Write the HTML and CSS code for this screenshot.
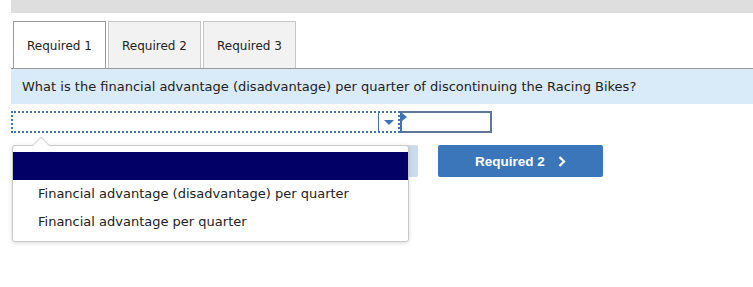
FILE: index.html
```html
<!DOCTYPE html>
<html lang="en">
<head>
  <meta charset="UTF-8">
  <title>Required 1</title>
  <link rel="stylesheet" href="styles.css">
</head>
<body>
  <div class="topbar"></div>

  <div class="tabs">
    <div class="tab active">Required 1</div>
    <div class="tab">Required 2</div>
    <div class="tab">Required 3</div>
  </div>

  <div class="question">What is the financial advantage (disadvantage) per quarter of discontinuing the Racing Bikes?</div>

  <div class="answer-row">
    <div class="select-box">
      <span class="select-arrow"></span>
    </div>
    <div class="amount-box"></div>
  </div>

  <div class="nav-row">
    <button class="nav-btn prev">Required 1</button>
    <button class="nav-btn next">Required 2
      <svg class="chev" width="8" height="11" viewBox="0 0 8 11"><path d="M1.5 1 L6 5.5 L1.5 10" fill="none" stroke="#fff" stroke-width="2.2"/></svg>
    </button>
  </div>

  <!-- open dropdown list -->
  <div class="dropdown">
    <div class="option selected"></div>
    <div class="option">Financial advantage (disadvantage) per quarter</div>
    <div class="option">Financial advantage per quarter</div>
  </div>
</body>
</html>
```

FILE: styles.css
```css
body {
  margin: 0;
  font-family: "DejaVu Sans", Verdana, sans-serif;
  font-size: 13px;
  color: #222;
  background: #fff;
}

.topbar {
  margin-left: 11px;
  height: 13px;
  background: #dedede;
}

.tabs {
  display: flex;
  gap: 2px;
  margin: 8px 0 0 13px;
}

.tab {
  width: 91px;
  height: 45px;
  padding-top: 1px;
  border: 1px solid #c6c6c6;
  border-bottom: none;
  background: #f2f2f2;
  display: flex;
  align-items: center;
  justify-content: center;
  font-size: 12px;
  color: #222;
}

.tab.active {
  background: #fff;
  border-color: #9a9a9a;
}

.question {
  margin-left: 11px;
  border-top: 1px solid #9a9a9a;
  background: #d9eaf8;
  height: 35px;
  line-height: 35px;
  padding-left: 11px;
  color: #222;
}

.answer-row {
  display: flex;
  margin: 7px 0 0 11px;
}

.select-box {
  position: relative;
  width: 385px;
  height: 18px;
  border: 2px dotted #3d74b7;
}

.select-box::before {
  content: "";
  position: absolute;
  left: 365px;
  top: 0;
  width: 1px;
  height: 18px;
  background: #3d74b7;
}

.select-arrow {
  position: absolute;
  left: 371px;
  top: 7px;
  border-left: 5px solid transparent;
  border-right: 5px solid transparent;
  border-top: 5px solid #3d74b7;
}

.amount-box {
  position: relative;
  width: 88px;
  height: 18px;
  border: 2px solid #5f7899;
  border-left: 2px solid #3d74b7;
}

.amount-box::before {
  content: "";
  position: absolute;
  left: 0;
  top: 0;
  border-top: 4px solid transparent;
  border-bottom: 4px solid transparent;
  border-left: 5px solid #3d74b7;
}

.nav-row {
  display: flex;
  gap: 20px;
  margin: 12px 0 0 253px;
}

.nav-btn {
  width: 165px;
  height: 32px;
  border: none;
  border-radius: 2px;
  font-family: "Liberation Sans", Arial, sans-serif;
  font-weight: bold;
  font-size: 13.5px;
  color: #fff;
  display: flex;
  align-items: center;
  justify-content: center;
}

.nav-btn.prev {
  background: #cddcec;
}

.nav-btn.next {
  background: #3a76b9;
  padding-left: 6px;
}

.chev {
  margin-left: 13px;
}

.dropdown {
  position: absolute;
  left: 12px;
  top: 145px;
  width: 395px;
  height: 89px;
  padding-top: 6px;
  border: 1px solid #c8c8c8;
  border-radius: 3px;
  background: #fff;
  box-shadow: 0 1px 4px rgba(0, 0, 0, 0.15);
}

.dropdown::before {
  content: "";
  position: absolute;
  left: 22px;
  top: -7px;
  width: 11px;
  height: 11px;
  background: #fff;
  border-left: 1px solid #d4d4d4;
  border-top: 1px solid #d4d4d4;
  transform: rotate(45deg);
}

.option {
  height: 28px;
  line-height: 28px;
  padding-left: 25px;
  color: #222;
}

.option.selected {
  position: relative;
  background: #020066;
}
```
